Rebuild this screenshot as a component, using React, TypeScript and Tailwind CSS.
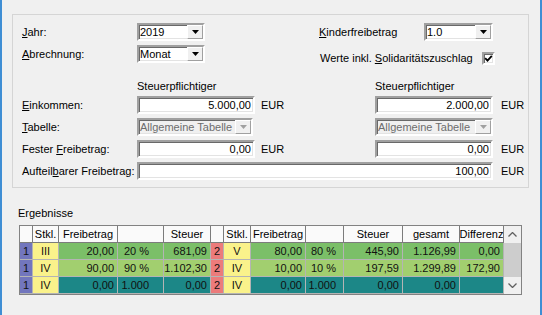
import React from "react";

const sunken =
  "border-2 border-t-[#a0a0a0] border-l-[#a0a0a0] border-r-white border-b-white shadow-[inset_1px_1px_0_#696969,inset_-1px_-1px_0_#e3e3e3]";

function Arrow({ disabled }: { disabled?: boolean }) {
  return (
    <svg width="7" height="4" viewBox="0 0 7 4">
      <polygon points="0,0 7,0 3.5,4" fill={disabled ? "#a0a0a0" : "#000"} />
    </svg>
  );
}

function Combo({ w, value, disabled }: { w: string; value: string; disabled?: boolean }) {
  return (
    <div
      className={`${w} h-[18px] ${sunken} ${
        disabled ? "bg-[#f0f0f0] text-[#6d6d6d]" : "bg-white text-black"
      } flex items-stretch`}
    >
      <div className="flex-1 pl-[1px] flex items-center overflow-hidden whitespace-nowrap">{value}</div>
      <div className="w-[16px] bg-[#f0f0f0] border border-t-white border-l-white border-r-[#a0a0a0] border-b-[#a0a0a0] flex items-center justify-center">
        <Arrow disabled={disabled} />
      </div>
    </div>
  );
}

function Input({ w, value }: { w: string; value: string }) {
  return (
    <div className={`${w} h-[18px] ${sunken} bg-white flex items-center justify-end pr-[2px] whitespace-nowrap`}>
      {value}
    </div>
  );
}

const colW = [
  "w-[13px]",
  "w-[26px]",
  "w-[59px]",
  "w-[46px]",
  "w-[47px]",
  "w-[13px]",
  "w-[27px]",
  "w-[55px]",
  "w-[38px]",
  "w-[59px]",
  "w-[57px]",
  "w-[44px]",
];

const headers = ["", "Stkl.", "Freibetrag", "", "Steuer", "", "Stkl.", "Freibetrag", "", "Steuer", "gesamt", "Differenz"];

type Row = { bg: string; cells: string[] };

const rows: Row[] = [
  {
    bg: "bg-[#7bbf68]",
    cells: ["1", "III", "20,00", "20 %", "681,09", "2", "V", "80,00", "80 %", "445,90", "1.126,99", "0,00"],
  },
  {
    bg: "bg-[#a2cf6f]",
    cells: ["1", "IV", "90,00", "90 %", "1.102,30", "2", "IV", "10,00", "10 %", "197,59", "1.299,89", "172,90"],
  },
  {
    bg: "bg-[#1c8787]",
    cells: ["1", "IV", "0,00", "1.000", "0,00", "2", "IV", "0,00", "1.000", "0,00", "0,00", ""],
  },
];

function cellClass(i: number, rowBg: string) {
  if (i === 0) return "bg-[#7276bd] justify-center";
  if (i === 5) return "bg-[#ec7b7b] justify-center";
  if (i === 1 || i === 6) return "bg-[#faf28b] justify-center";
  if (i === 3) return `${rowBg} justify-end pr-[14px]`;
  if (i === 8) return `${rowBg} justify-end pr-[7px]`;
  return `${rowBg} justify-end pr-[3px]`;
}

function Chevron({ up }: { up?: boolean }) {
  return (
    <svg width="9" height="5" viewBox="0 0 9 5">
      <polyline
        points={up ? "0.5,4.5 4.5,0.5 8.5,4.5" : "0.5,0.5 4.5,4.5 8.5,0.5"}
        fill="none"
        stroke="#606060"
        strokeWidth="1.3"
      />
    </svg>
  );
}

export default function App() {
  return (
    <div className="w-[542px] h-[315px] bg-[#f0f0f0] border-l-2 border-r-2 border-[#3f8ed4] pt-[14px] font-['Liberation_Sans',Arial,sans-serif] text-[11px] leading-[13px] text-black overflow-hidden">
      {/* Group box */}
      <div className="ml-[10px] w-[517px] h-[174px] border border-[#d5d5d5] pt-[8px] pl-[9px]">
        {/* Jahr */}
        <div className="flex items-center h-[18px]">
          <div className="w-[115px]">
            <u>J</u>ahr:
          </div>
          <Combo w="w-[68px]" value="2019" />
          <div className="ml-[114px] w-[105px]">
            <u>K</u>inderfreibetrag
          </div>
          <Combo w="w-[69px]" value="1.0" />
        </div>
        {/* Abrechnung */}
        <div className="flex items-start mt-[4px]">
          <div className="flex items-center h-[18px]">
            <div className="w-[115px]">
              <u>A</u>brechnung:
            </div>
            <Combo w="w-[68px]" value="Monat" />
          </div>
          <div className="ml-[115px] mt-[7px] flex items-center h-[13px]">
            <div className="w-[162px] whitespace-nowrap">
              Werte inkl. <u>S</u>olidaritätszuschlag
            </div>
            <div className={`w-[13px] h-[13px] ${sunken} bg-white flex items-center justify-center`}>
              <svg width="9" height="9" viewBox="0 0 9 9">
                <path d="M1.2 4.2 L3.5 6.6 L7.8 1.8" fill="none" stroke="#000" strokeWidth="1.8" />
              </svg>
            </div>
          </div>
        </div>
        {/* Steuerpflichtiger */}
        <div className="flex items-center h-[14px] mt-[14px]">
          <div className="ml-[115px] w-[238px]">Steuerpflichtiger</div>
          <div>Steuerpflichtiger</div>
        </div>
        {/* Einkommen */}
        <div className="flex items-center h-[18px] mt-[3px]">
          <div className="w-[115px]">
            <u>E</u>inkommen:
          </div>
          <Input w="w-[118px]" value="5.000,00" />
          <div className="w-[120px] pl-[6px]">EUR</div>
          <Input w="w-[118px]" value="2.000,00" />
          <div className="pl-[8px]">EUR</div>
        </div>
        {/* Tabelle */}
        <div className="flex items-center h-[18px] mt-[4px]">
          <div className="w-[115px]">
            <u>T</u>abelle:
          </div>
          <Combo w="w-[116px]" value="Allgemeine Tabelle" disabled />
          <div className="w-[122px]" />
          <Combo w="w-[118px]" value="Allgemeine Tabelle" disabled />
        </div>
        {/* Fester Freibetrag */}
        <div className="flex items-center h-[18px] mt-[4px]">
          <div className="w-[115px]">
            Fester <u>F</u>reibetrag:
          </div>
          <Input w="w-[118px]" value="0,00" />
          <div className="w-[120px] pl-[6px]">EUR</div>
          <Input w="w-[118px]" value="0,00" />
          <div className="pl-[8px]">EUR</div>
        </div>
        {/* Aufteilbarer Freibetrag */}
        <div className="flex items-center h-[18px] mt-[4px]">
          <div className="w-[115px] whitespace-nowrap">
            Aufteil<u>b</u>arer Freibetrag:
          </div>
          <Input w="w-[356px]" value="100,00" />
          <div className="pl-[8px]">EUR</div>
        </div>
      </div>

      {/* Ergebnisse */}
      <div className="ml-[16px] mt-[19px] h-[13px]">Ergebnisse</div>
      <div className="ml-[17px] mt-[5px] w-[503px] h-[70px] border border-[#828282] bg-[#f0f0f0] flex">
        <div className="w-[484px] flex flex-col">
          <div className="flex h-[17px]">
            {headers.map((h, i) => (
              <div
                key={i}
                className={`${colW[i]} h-[17px] bg-[#fafafa] border-r border-b border-[#7c7c7c] flex items-center justify-center overflow-hidden whitespace-nowrap`}
              >
                {h}
              </div>
            ))}
          </div>
          {rows.map((r, ri) => (
            <div key={ri} className="flex h-[17px]">
              {r.cells.map((c, i) => (
                <div
                  key={i}
                  className={`${colW[i]} h-[17px] border-r border-b border-black/25 flex items-center overflow-hidden whitespace-nowrap text-[#111]`}
                >
                  <div className={`w-full h-full flex items-center ${cellClass(i, r.bg)}`}>{c}</div>
                </div>
              ))}
            </div>
          ))}
        </div>
        <div className="w-[17px] flex flex-col bg-[#f0f0f0]">
          <div className="h-[17px] flex items-center justify-center">
            <Chevron up />
          </div>
          <div className="h-[34px] bg-[#cdcdcd]" />
          <div className="h-[17px] flex items-center justify-center">
            <Chevron />
          </div>
        </div>
      </div>
    </div>
  );
}
